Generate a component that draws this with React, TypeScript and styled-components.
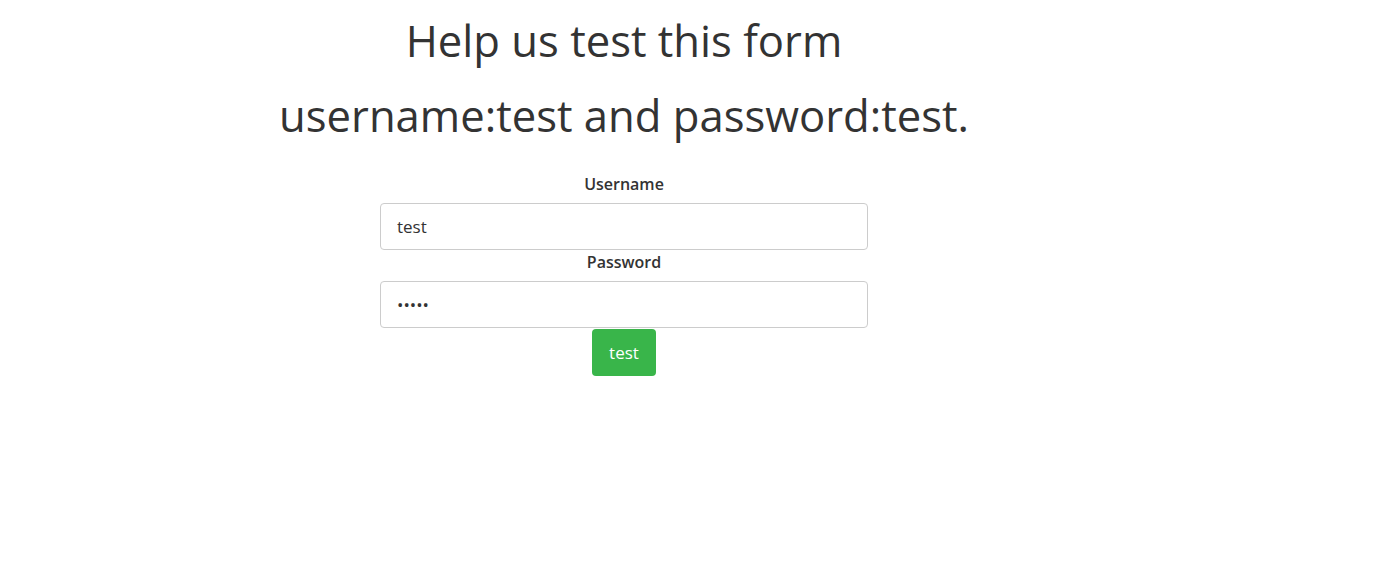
import React from 'react';
import styled, { createGlobalStyle } from 'styled-components';

const GlobalStyle = createGlobalStyle`
  html, body {
    margin: 0;
    padding: 0;
    background: #fff;
    font-family: 'Open Sans', 'Noto Sans', sans-serif;
    color: #333;
  }
`;

const Page = styled.div`
  width: 1248px;
  padding-top: 3px;
  display: flex;
  flex-direction: column;
  align-items: center;
  text-align: center;
`;

const Title = styled.h1`
  margin: 0;
  font-size: 43.6px;
  font-weight: 400;
  line-height: 75px;
  color: #333;
`;

const Form = styled.form`
  margin-top: 19px;
  width: 488px;
  display: flex;
  flex-direction: column;
  align-items: center;
`;

const Label = styled.label`
  display: block;
  font-size: 16px;
  font-weight: 600;
  line-height: 24px;
  margin-bottom: 7px;
  color: #333;
`;

const Input = styled.input`
  box-sizing: border-box;
  width: 100%;
  height: 47px;
  padding: 0 16px;
  border: 1px solid #ccc;
  border-radius: 4px;
  font-family: inherit;
  font-size: 17px;
  color: #333;
  background: #fff;
  outline: none;
`;

const Field = styled.div`
  width: 100%;
  display: flex;
  flex-direction: column;
  align-items: center;
`;

const Submit = styled.button`
  margin-top: 1px;
  height: 47px;
  padding: 0 17px;
  border: none;
  border-radius: 4px;
  background: #39b54a;
  color: #fff;
  font-family: inherit;
  font-size: 17px;
  cursor: pointer;
`;

export default function App() {
  return (
    <>
      <GlobalStyle />
      <Page>
        <Title>Help us test this form</Title>
        <Title>username:test and password:test.</Title>
        <Form onSubmit={(e) => e.preventDefault()}>
          <Field>
            <Label htmlFor="username">Username</Label>
            <Input id="username" type="text" defaultValue="test" />
          </Field>
          <Field>
            <Label htmlFor="password">Password</Label>
            <Input id="password" type="password" defaultValue="test1" />
          </Field>
          <Submit type="submit">test</Submit>
        </Form>
      </Page>
    </>
  );
}
